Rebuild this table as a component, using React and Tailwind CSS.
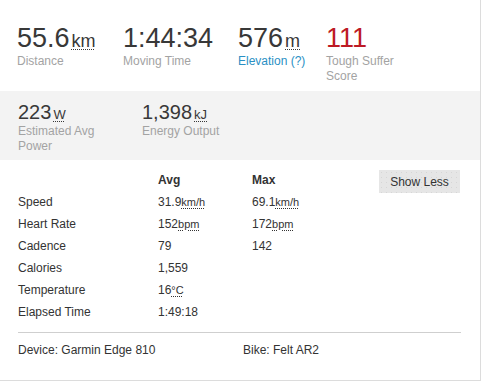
import React from "react";

const U = ({ children, className = "" }) => (
  <span className={"underline decoration-dotted decoration-1 underline-offset-2 leading-[0] " + className}>{children}</span>
);

const rows = [
  ["Speed", <>31.9<U className="text-[11px]">km/h</U></>, <>69.1<U className="text-[11px]">km/h</U></>],
  ["Heart Rate", <>152<U className="text-[11px]">bpm</U></>, <>172<U className="text-[11px]">bpm</U></>],
  ["Cadence", "79", "142"],
  ["Calories", "1,559", ""],
  ["Temperature", <>16<U className="text-[11px]">°C</U></>, ""],
  ["Elapsed Time", "1:49:18", ""],
];

export default function App() {
  return (
    <div className="w-[481px] h-[381px] bg-white border-r border-b border-[#dcdcdc] text-[#333] overflow-hidden" style={{ fontFamily: '"Liberation Sans", Arial, sans-serif' }}>
      {/* Top stats */}
      <div className="h-[91px] pt-[25px] pl-[17px] flex">
        <div className="w-[106px]">
          <div className="text-[27px] leading-[27px] text-[#383838]">55.6<U className="text-[18px] ml-[2px]">km</U></div>
          <div className="mt-[2px] text-[12px] leading-[15px] text-[#a3a3a3]">Distance</div>
        </div>
        <div className="w-[115px]">
          <div className="text-[27px] leading-[27px] text-[#383838]">1:44:34</div>
          <div className="mt-[2px] text-[12px] leading-[15px] text-[#a3a3a3]">Moving Time</div>
        </div>
        <div className="w-[88px]">
          <div className="text-[27px] leading-[27px] text-[#383838]">576<U className="text-[18px] ml-[2px]">m</U></div>
          <div className="mt-[2px] text-[12px] leading-[15px] text-[#2a8fc4]">Elevation (?)</div>
        </div>
        <div className="w-[80px]">
          <div className="text-[27px] leading-[27px] text-[#bd1a24]">111</div>
          <div className="mt-[2px] text-[12px] leading-[15px] text-[#a3a3a3]">Tough Suffer Score</div>
        </div>
      </div>

      {/* Gray band */}
      <div className="h-[69px] bg-[#f3f3f3] pt-[11px] pl-[18px] flex">
        <div className="w-[124px]">
          <div className="text-[20px] leading-[20px] text-[#383838]">223<U className="text-[13px] ml-[2px]">W</U></div>
          <div className="mt-[2px] w-[80px] text-[12px] leading-[15px] text-[#a3a3a3]">Estimated Avg Power</div>
        </div>
        <div>
          <div className="text-[20px] leading-[20px] text-[#383838]">1,398<U className="text-[13px] ml-[2px]">kJ</U></div>
          <div className="mt-[2px] text-[12px] leading-[15px] text-[#a3a3a3]">Energy Output</div>
        </div>
      </div>

      {/* Table */}
      <div className="pt-[9px] pl-[18px] pr-[20px] flex justify-between">
        <div className="text-[12px] text-[#333]">
          <div className="flex h-[22px] items-center font-bold">
            <div className="w-[140px]"></div>
            <div className="w-[94px]">Avg</div>
            <div>Max</div>
          </div>
          {rows.map(([l, a, m]) => (
            <div key={l} className="flex h-[22px] items-center">
              <div className="w-[140px]">{l}</div>
              <div className="w-[94px]">{a}</div>
              <div>{m}</div>
            </div>
          ))}
        </div>
        <button className="mt-[1px] h-[23px] w-[81px] bg-[#e6e6e6] text-[12px] text-[#333] self-start" style={{ backgroundImage: "radial-gradient(#d6d6d6 0.6px, transparent 0.7px)", backgroundSize: "5px 5px" }}>
          Show Less
        </button>
      </div>

      <div className="mt-[9px] ml-[18px] w-[443px] h-px bg-[#cfcfcf]"></div>

      <div className="pt-[9px] pl-[18px] flex text-[12px] leading-[16px] text-[#333]">
        <div className="w-[225px]">Device: Garmin Edge 810</div>
        <div>Bike: Felt AR2</div>
      </div>
    </div>
  );
}
